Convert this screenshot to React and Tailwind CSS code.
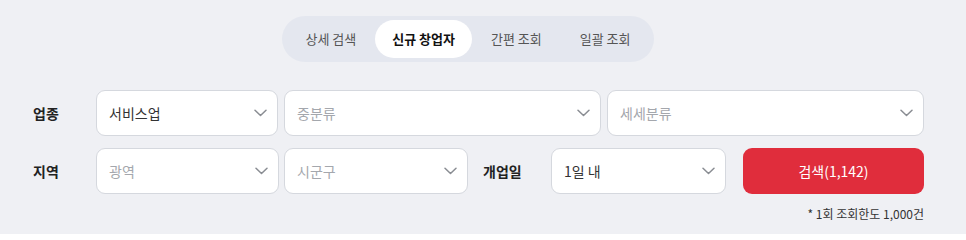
import React, { useState } from "react";

const FONT = { fontFamily: '"Noto Sans CJK KR", "Noto Sans", sans-serif' };

function Chevron() {
  return (
    <svg width="13" height="8" viewBox="0 0 13 8" fill="none" className="shrink-0">
      <path d="M1 1.2 6.5 6.5 12 1.2" stroke="#8a8d93" strokeWidth="1.5" strokeLinecap="round" strokeLinejoin="round" />
    </svg>
  );
}

function SelectBox({ value, placeholder, className }) {
  return (
    <div className={`h-[46px] flex items-center justify-between pl-[12px] pr-[10px] bg-white border border-[#d5d8de] rounded-[9px] ${className}`}>
      <span className={`text-[14px] ${value ? "text-[#333]" : "text-[#a4a7ad]"}`}>{value || placeholder}</span>
      <Chevron />
    </div>
  );
}

export default function App() {
  const [tab, setTab] = useState(1);
  const tabs = ["상세 검색", "신규 창업자", "간편 조회", "일괄 조회"];

  return (
    <div className="w-[966px] h-[234px] bg-[#eff0f4] overflow-hidden" style={FONT}>
      {/* tabs */}
      <div className="flex justify-center pt-[16px] pr-[30px]">
        <div className="flex items-center p-[4px] bg-[#e4e7ef] rounded-full">
          {tabs.map((t, i) => (
            <button
              key={t}
              onClick={() => setTab(i)}
              className={`h-[38px] rounded-full text-[13px] ${
                tab === i ? "bg-white text-[#111] font-semibold px-[17px]" : "text-[#555] px-[19px]"
              }`}
            >
              {t}
            </button>
          ))}
        </div>
      </div>

      {/* filters */}
      <div className="pl-[33px] pt-[28px] w-[924px]">
        <div className="flex items-center">
          <span className="w-[63px] text-[14px] font-semibold text-[#222]">업종</span>
          <div className="flex-1 flex gap-[6px]">
            <SelectBox value="서비스업" className="w-[182px]" />
            <SelectBox placeholder="중분류" className="flex-1" />
            <SelectBox placeholder="세세분류" className="flex-1" />
          </div>
        </div>

        <div className="flex items-center mt-[12px]">
          <span className="w-[63px] text-[14px] font-semibold text-[#222]">지역</span>
          <SelectBox placeholder="광역" className="w-[183px]" />
          <SelectBox placeholder="시군구" className="w-[184px] ml-[5px]" />
          <span className="ml-[15px] w-[68px] text-[14px] font-semibold text-[#222]">개업일</span>
          <SelectBox value="1일 내" className="w-[175px]" />
          <button className="ml-[17px] flex-1 h-[46px] rounded-[9px] bg-[#e02d3c] text-white text-[14px]">
            검색(1,142)
          </button>
        </div>

        <div className="flex justify-end mt-[11px] text-[12px] text-[#333]">* 1회 조회한도 1,000건</div>
      </div>
    </div>
  );
}
